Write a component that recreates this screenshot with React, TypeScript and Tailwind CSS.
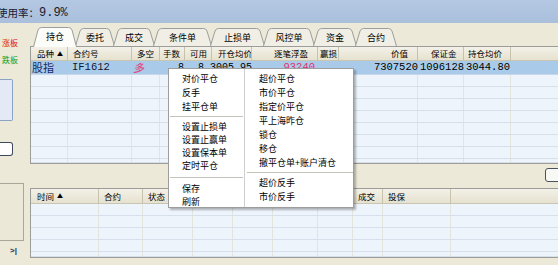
import React from 'react'

const CJK = "font-['Noto_Sans_CJK_SC',sans-serif]"
const MONO = "font-['Liberation_Mono','Noto_Sans_CJK_SC',monospace]"

interface Tab {
  label: string
  w: number
  cls: string
}

const tabs: Tab[] = [
  { label: '持仓', w: 44, cls: 'w-[44px]' },
  { label: '委托', w: 40, cls: 'w-[40px]' },
  { label: '成交', w: 42, cls: 'w-[42px]' },
  { label: '条件单', w: 59, cls: 'w-[59px]' },
  { label: '止损单', w: 55, cls: 'w-[55px]' },
  { label: '风控单', w: 52, cls: 'w-[52px]' },
  { label: '资金', w: 44, cls: 'w-[44px]' },
  { label: '合约', w: 42, cls: 'w-[42px]' },
]

interface Col {
  w: string
  head: string
  hc: string
  val?: string
  dc?: string
}

const topCols: Col[] = [
  { w: 'w-[37px]', head: '品种', hc: 'pl-[6px]', val: '股指', dc: `pl-[1px] text-[11px] text-[#14286a] ${CJK}` },
  { w: 'w-[64px]', head: '合约号', hc: 'pl-[5px]', val: 'IF1612', dc: `pl-[4px] text-[10.5px] text-[#101830] ${MONO}` },
  { w: 'w-[28px]', head: '多空', hc: 'pl-[5px]', val: '多', dc: `pl-[1px] text-[11px] italic text-[#e23a78] ${CJK}` },
  { w: 'w-[25px]', head: '手数', hc: 'pl-[3px]', val: '8', dc: `justify-end pr-[1px] text-[10px] ${MONO}` },
  { w: 'w-[27px]', head: '可用', hc: 'pl-[5px]', val: '8', dc: `justify-end pr-[8px] text-[10px] ${MONO}` },
  { w: 'w-[40px]', head: '开仓均价', hc: 'pl-[6px]', val: '3005.95', dc: `justify-end text-[10px] ${MONO}` },
  { w: 'w-[66px]', head: '逐笔浮盈', hc: 'pl-[22px]', val: '93240', dc: `justify-end pr-[3px] text-[10.5px] text-[#e0306a] ${MONO}` },
  { w: 'w-[21px]', head: '赢损', hc: 'pl-[2px]' },
  { w: 'w-[79px]', head: '价值', hc: 'justify-end pr-[9px]', val: '7307520', dc: `justify-end text-[10.5px] ${MONO}` },
  { w: 'w-[46px]', head: '保证金', hc: 'pl-[13px]', val: '1096128', dc: `justify-end text-[10.5px] ${MONO}` },
  { w: 'w-[47px]', head: '持仓均价', hc: 'pl-[4px]', val: '3044.80', dc: `justify-end pr-[1px] text-[10.5px] ${MONO}` },
]

// the middle columns sit under the popup menu, so their titles never show
const bottomCols: Col[] = [
  { w: 'w-[68px]', head: '时间', hc: 'pl-[6px]' },
  { w: 'w-[44px]', head: '合约', hc: 'pl-[5px]' },
  { w: 'w-[50px]', head: '状态', hc: 'pl-[5px]' },
  { w: 'w-[40px]', head: '', hc: 'pl-[5px]' },
  { w: 'w-[40px]', head: '', hc: 'pl-[5px]' },
  { w: 'w-[45px]', head: '', hc: 'pl-[5px]' },
  { w: 'w-[35px]', head: '', hc: 'pl-[5px]' },
  { w: 'w-[30px]', head: '成交', hc: 'pl-[5px]' },
  { w: 'w-[68px]', head: '投保', hc: 'pl-[5px]' },
]

function TabShape({ w, h, active }: { w: number; h: number; active: boolean }) {
  const d = `M0.5,${h} L5,3 Q6,0.5 8.5,0.5 L${w - 8.5},0.5 Q${w - 6},0.5 ${w - 5},3 L${w - 0.5},${h}`
  return (
    <svg className="absolute inset-0" width={w} height={h}>
      <path d={d} fill={active ? '#fcfcf9' : '#f1efe5'} stroke="#9a9e9c" strokeWidth="1" />
    </svg>
  )
}

function TabStrip() {
  return (
    <div className="h-[23px] flex items-end pl-[3px]">
      {tabs.map((t, i) => {
        const active = i === 0
        return (
          <div
            key={t.label}
            className={`${t.cls} relative shrink-0 flex items-center justify-center ${
              active ? 'h-[20px] top-px z-10' : 'h-[18px] -ml-[2px]'
            }`}
          >
            <TabShape w={t.w} h={active ? 20 : 18} active={active} />
            <span className={`relative text-[9px] leading-none text-black ${CJK} ${active ? '-mt-[1px]' : ''}`}>
              {t.label}
            </span>
          </div>
        )
      })}
    </div>
  )
}

function HeaderRow({ cols, h }: { cols: Col[]; h: string }) {
  return (
    <div className={`${h} flex bg-gradient-to-b from-[#f3f1e8] to-[#e6e2d0] border-b border-[#c9c5b1]`}>
      {cols.map((c, i) => (
        <div
          key={i}
          className={`${c.w} shrink-0 flex items-center whitespace-nowrap overflow-hidden border-r border-[#c6c2ae] text-[8.5px] leading-none text-black ${CJK} ${c.hc}`}
        >
          {c.head}
          {i === 0 && <span className="ml-[3px] text-[6px]">▲</span>}
        </div>
      ))}
      <div className="flex-1" />
    </div>
  )
}

function EmptyRow({ cols, h }: { cols: Col[]; h: string }) {
  return (
    <div className={`${h} flex border-b border-[#d7e0ea] shrink-0`}>
      {cols.map((c, i) => (
        <div key={i} className={`${c.w} shrink-0 border-r border-[#e1e5dc]`} />
      ))}
      <div className="flex-1" />
    </div>
  )
}

function ContextMenu() {
  const left: (string | null)[] = ['对价平仓', '反手', '挂平仓单', null, '设置止损单', '设置止赢单', '设置保本单', '定时平仓', null, '保存', '刷新']
  const leftH = ['h-[14px]', 'h-[14px]', 'h-[14px]', 'h-[7px]', 'h-[13px]', 'h-[13px]', 'h-[13px]', 'h-[13px]', 'h-[10px]', 'h-[13px]', 'h-[13px]']
  const right: (string | null)[] = ['超价平仓', '市价平仓', '指定价平仓', '平上海昨仓', '锁仓', '移仓', '撤平仓单+账户清仓', null, '超价反手', '市价反手']
  return (
    <div className="absolute left-[168px] top-[68px] w-[186px] h-[140px] bg-white border border-[#9d9d9d] shadow-[2px_2px_2px_rgba(0,0,0,0.28)] flex z-20">
      <div className="w-[76px] pt-[2px] border-r border-[#cfcfcf]">
        {left.map((it, i) =>
          it ? (
            <div key={i} className={`${leftH[i]} flex items-center pl-[13px] text-[9px] leading-none text-black ${CJK}`}>
              {it}
            </div>
          ) : (
            <div key={i} className={`${leftH[i]} flex items-center px-[1px]`}>
              <div className="h-px w-full bg-[#c5c3b8]" />
            </div>
          ),
        )}
      </div>
      <div className="flex-1 pt-[2px]">
        {right.map((it, i) =>
          it ? (
            <div key={i} className={`h-[14px] flex items-center pl-[14px] text-[9px] leading-none text-black ${CJK}`}>
              {it}
            </div>
          ) : (
            <div key={i} className="h-[6px] flex items-center pl-[2px]">
              <div className="h-px w-full bg-[#c5c3b8]" />
            </div>
          ),
        )}
      </div>
    </div>
  )
}

export default function App() {
  return (
    <div className={`relative w-[558px] h-[265px] overflow-hidden bg-[#ece9d8] flex flex-col ${CJK}`}>
      <div className="h-[23px] shrink-0 bg-gradient-to-b from-[#b4c8e2] to-[#a9bfdc] flex items-center pt-[3px]">
        <span className="ml-[-3px] text-[10.5px] leading-none text-[#1a1a30]">使用率：</span>
        <span className={`text-[12px] leading-none text-[#1a1a30] ${MONO}`}>9.9%</span>
      </div>

      <div className="flex flex-1">
        <div className="w-[27px] shrink-0 flex flex-col">
          <div className="mt-[15px] h-[10px] flex items-center pl-[2px] text-[8px] leading-none text-[#e01010] whitespace-nowrap">涨板</div>
          <div className="mt-[7px] h-[10px] flex items-center pl-[2px] text-[8px] leading-none text-[#10a020] whitespace-nowrap">跌板</div>
          <div className="mt-[14px] w-[13px] h-[42px] bg-[#e4e9f6] border border-l-0 border-[#8aa2c4] rounded-r-[2px]" />
          <div className="mt-[21px] w-[13px] h-[14px] bg-white border border-l-0 border-[#3c4a5c] rounded-r-[3px]" />
          <div className="mt-[27px] w-[24px] h-[58px] border border-l-0 border-[#a9a79a] bg-[#ebe8d8]" />
          <div className="mt-[5px] h-[10px] pl-[10px] flex items-center text-[8px] leading-none text-[#2a3050] font-['Liberation_Sans',sans-serif] font-bold">
            &gt;|
          </div>
        </div>

        <div className="flex-1 flex flex-col pl-[3px]">
          <TabStrip />

          <div className="h-[118px] shrink-0 flex flex-col border-l border-t border-b border-[#9c9c98] bg-[#eef4fc] overflow-hidden">
            <HeaderRow cols={topCols} h="h-[14px] shrink-0" />
            <div className="h-[14px] shrink-0 flex bg-[#a9cbe9] border-b border-[#c8d8ea]">
              {topCols.map((c, i) => (
                <div key={i} className={`${c.w} shrink-0 flex items-center whitespace-nowrap leading-none ${c.dc ?? ''}`}>
                  {c.val ?? ''}
                </div>
              ))}
              <div className="flex-1" />
            </div>
            {[0, 1, 2, 3, 4, 5, 6].map((r) => (
              <EmptyRow key={r} cols={topCols} h="h-[12px]" />
            ))}
            <EmptyRow cols={topCols} h="flex-1" />
          </div>

          <div className="h-[24px] shrink-0 flex justify-end items-start">
            <div className="mt-[4px] -mr-[6px] w-[19px] h-[14px] bg-[#f8f8f4] border border-[#4a5260] rounded-[3px]" />
          </div>

          <div className="h-[70px] shrink-0 flex flex-col border-l border-t border-b border-[#9c9c98] bg-[#eef4fc] overflow-hidden">
            <HeaderRow cols={bottomCols} h="h-[15px] shrink-0" />
            {[0, 1, 2, 3].map((r) => (
              <EmptyRow key={r} cols={bottomCols} h="h-[12px]" />
            ))}
            <EmptyRow cols={bottomCols} h="flex-1" />
          </div>
        </div>
      </div>

      <ContextMenu />
    </div>
  )
}
